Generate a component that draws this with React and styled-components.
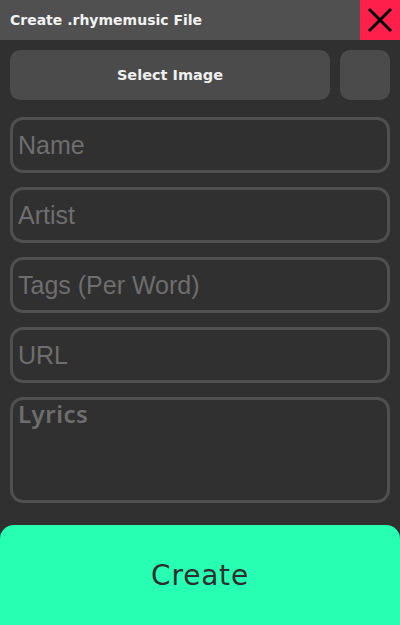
import styled, { createGlobalStyle } from "styled-components";

const GlobalStyle = createGlobalStyle`
  html, body {
    margin: 0;
    padding: 0;
    background: #303030;
  }
  * {
    box-sizing: border-box;
  }
`;

const Page = styled.div`
  width: 400px;
  height: 625px;
  display: flex;
  flex-direction: column;
  background: #303030;
  font-family: "DejaVu Sans", "Noto Sans", sans-serif;
  overflow: hidden;
`;

const TitleBar = styled.div`
  height: 40px;
  display: flex;
  align-items: center;
  background: #505050;
`;

const Title = styled.div`
  flex: 1;
  padding-left: 10px;
  color: #f2f2f2;
  font-size: 14px;
  font-weight: 700;
`;

const CloseBtn = styled.button`
  width: 40px;
  height: 40px;
  border: 0;
  padding: 0;
  background: #ff1f4b;
  display: grid;
  place-items: center;
  cursor: pointer;
`;

const Body = styled.div`
  flex: 1;
  display: flex;
  flex-direction: column;
  gap: 14px;
  padding: 10px 10px 0;
`;

const ImageRow = styled.div`
  display: flex;
  gap: 10px;
  height: 50px;
  margin-bottom: 3px;
`;

const ImageBtn = styled.button`
  flex: ${({ $grow }) => ($grow ? 1 : "0 0 50px")};
  height: 50px;
  border: 0;
  border-radius: 10px;
  background: #4b4b4b;
  color: #efefef;
  font-family: "DejaVu Sans", "Noto Sans", sans-serif;
  font-size: 14.5px;
  font-weight: 700;
`;

const Field = styled.input`
  width: 100%;
  height: 56px;
  border: 3px solid #505050;
  border-radius: 13px;
  background: #303030;
  padding: 0 5px;
  color: #ddd;
  font-family: "Liberation Sans", Arial, sans-serif;
  font-size: 25px;
  outline: none;

  &::placeholder {
    color: #6e6e6e;
  }
`;

const Lyrics = styled.textarea`
  width: 100%;
  height: 106px;
  border: 3px solid #505050;
  border-radius: 13px;
  background: #303030;
  padding: 0 5px;
  color: #ddd;
  font-family: "Noto Sans", "DejaVu Sans", sans-serif;
  font-size: 24px;
  font-weight: 600;
  letter-spacing: 0.5px;
  line-height: 1.2;
  resize: none;
  outline: none;

  &::placeholder {
    color: #6e6e6e;
  }
`;

const CreateBtn = styled.button`
  height: 100px;
  margin-top: auto;
  border: 0;
  border-radius: 14px 14px 0 0;
  background: #27ffb3;
  color: #2e2e2e;
  font-family: "DejaVu Sans", "Noto Sans", sans-serif;
  font-size: 28px;
  font-weight: 400;
  letter-spacing: 0.8px;
  cursor: pointer;
`;

export default function App() {
  return (
    <>
      <GlobalStyle />
      <Page>
        <TitleBar>
          <Title>Create .rhymemusic File</Title>
          <CloseBtn aria-label="Close">
            <svg width="26" height="26" viewBox="0 0 26 26">
              <path d="M2 2 L24 24 M24 2 L2 24" stroke="#000" strokeWidth="3" />
            </svg>
          </CloseBtn>
        </TitleBar>
        <Body>
          <ImageRow>
            <ImageBtn $grow>Select Image</ImageBtn>
            <ImageBtn />
          </ImageRow>
          <Field placeholder="Name" />
          <Field placeholder="Artist" />
          <Field placeholder="Tags (Per Word)" />
          <Field placeholder="URL" />
          <Lyrics placeholder="Lyrics" />
        </Body>
        <CreateBtn>Create</CreateBtn>
      </Page>
    </>
  );
}
